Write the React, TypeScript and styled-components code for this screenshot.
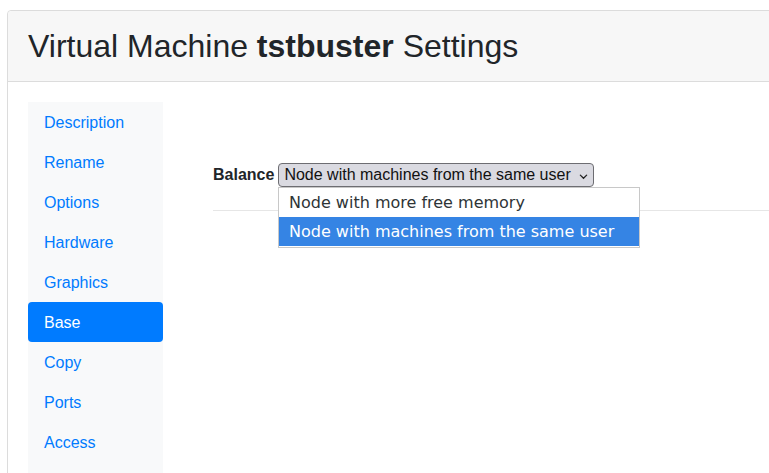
import styled, { createGlobalStyle } from "styled-components";

const GlobalStyle = createGlobalStyle`
  html, body {
    margin: 0;
    padding: 0;
    overflow: hidden;
    background: #fff;
  }
  body {
    font-family: "Liberation Sans", Arial, sans-serif;
    font-size: 16px;
    color: #212529;
  }
`;

const Page = styled.div`
  padding: 10px 0 0 7px;
  width: 960px;
`;

const Card = styled.div`
  border: 1px solid #dcdcdc;
  border-radius: 4px;
  background: #fff;
`;

const CardHeader = styled.div`
  background: #f7f7f7;
  border-bottom: 1px solid #dcdcdc;
  padding: 16px 20px;
  border-radius: 4px 4px 0 0;
`;

const Title = styled.h2`
  margin: 0;
  font-size: 32px;
  font-weight: 400;
  line-height: 38px;
  color: #212529;

  b {
    font-weight: 700;
  }
`;

const CardBody = styled.div`
  display: flex;
  padding: 20px 20px 0;
  gap: 50px;
`;

const Nav = styled.nav`
  width: 135px;
  flex-shrink: 0;
  background: #f8f9fa;
  display: flex;
  flex-direction: column;
  padding-bottom: 40px;
`;

const NavLink = styled.a<{ $active?: boolean }>`
  display: block;
  padding: 9px 16px 7px;
  line-height: 24px;
  font-size: 16px;
  text-decoration: none;
  border-radius: 4px;
  color: ${(p) => (p.$active ? "#fff" : "#007bff")};
  background: ${(p) => (p.$active ? "#007bff" : "transparent")};
`;

const Content = styled.div`
  flex: 1;
  padding-top: 61px;
`;

const FieldRow = styled.div`
  position: relative;
  display: flex;
  align-items: center;
  gap: 4px;
  height: 24px;
`;

const Label = styled.label`
  font-weight: 700;
  font-size: 16px;
`;

const SelectBox = styled.div`
  display: flex;
  align-items: center;
  gap: 8px;
  height: 22px;
  padding: 0 5px 0 5px;
  background: #dadae1;
  border: 1px solid #6d6d72;
  border-radius: 4px;
  font-size: 16px;
  color: #111;
  cursor: default;
`;

const Chevron = styled.svg`
  width: 9px;
  height: 9px;
  margin-top: 2px;
`;

const Popup = styled.ul`
  position: absolute;
  left: 65px;
  top: 24px;
  width: 360px;
  margin: 0;
  padding: 0 0 1px;
  list-style: none;
  background: #fff;
  border: 1px solid #c8c8c8;
  font-family: "DejaVu Sans", "Liberation Sans", sans-serif;
  font-size: 16px;
  z-index: 2;
`;

const Option = styled.li<{ $selected?: boolean }>`
  padding: 0 10px;
  height: 29px;
  line-height: 29px;
  white-space: nowrap;
  color: ${(p) => (p.$selected ? "#fff" : "#2e3436")};
  background: ${(p) => (p.$selected ? "#3584e4" : "transparent")};
`;

const Divider = styled.hr`
  margin: 23px 0 0;
  border: 0;
  border-top: 1px solid #e6e6e6;
`;

const navItems = [
  "Description",
  "Rename",
  "Options",
  "Hardware",
  "Graphics",
  "Base",
  "Copy",
  "Ports",
  "Access",
];

const options = [
  "Node with more free memory",
  "Node with machines from the same user",
];

export default function App() {
  const selected = options[1];
  return (
    <>
      <GlobalStyle />
      <Page>
        <Card>
          <CardHeader>
            <Title>
              Virtual Machine <b>tstbuster</b> Settings
            </Title>
          </CardHeader>
          <CardBody>
            <Nav>
              {navItems.map((item) => (
                <NavLink key={item} href="#" $active={item === "Base"}>
                  {item}
                </NavLink>
              ))}
            </Nav>
            <Content>
              <FieldRow>
                <Label>Balance</Label>
                <SelectBox>
                  {selected}
                  <Chevron viewBox="0 0 10 10">
                    <path
                      d="M1.5 3.5 L5 7 L8.5 3.5"
                      fill="none"
                      stroke="#222"
                      strokeWidth="1.4"
                      strokeLinecap="round"
                    />
                  </Chevron>
                </SelectBox>
                <Popup>
                  {options.map((o) => (
                    <Option key={o} $selected={o === selected}>
                      {o}
                    </Option>
                  ))}
                </Popup>
              </FieldRow>
              <Divider />
            </Content>
          </CardBody>
        </Card>
      </Page>
    </>
  );
}
